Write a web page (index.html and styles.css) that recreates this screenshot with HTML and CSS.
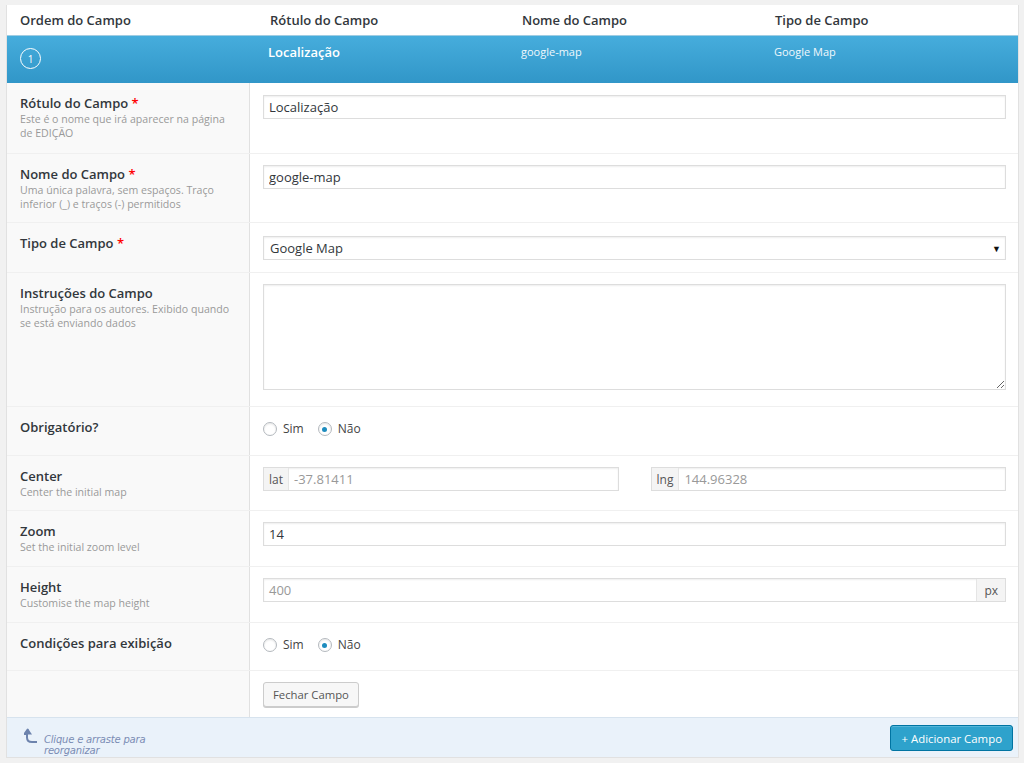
FILE: index.html
```html
<!DOCTYPE html>
<html lang="pt">
<head>
<meta charset="utf-8">
<title>Campos</title>
<link rel="stylesheet" href="styles.css">
</head>
<body>
<div class="box">
  <div class="thead">
    <div>Ordem do Campo</div>
    <div>Rótulo do Campo</div>
    <div>Nome do Campo</div>
    <div>Tipo de Campo</div>
  </div>
  <div class="field-row">
    <div><span class="order">1</span></div>
    <div class="fr-label">Localização</div>
    <div class="fr-small">google-map</div>
    <div class="fr-small">Google Map</div>
  </div>

  <div class="row r-two">
    <div class="lbl"><b>Rótulo do Campo <span class="req">*</span></b><p>Este é o nome que irá aparecer na página de EDIÇÃO</p></div>
    <div class="ctl"><input class="txt" type="text" value="Localização"></div>
  </div>
  <div class="row r-two">
    <div class="lbl"><b>Nome do Campo <span class="req">*</span></b><p>Uma única palavra, sem espaços. Traço inferior (_) e traços (-) permitidos</p></div>
    <div class="ctl"><input class="txt" type="text" value="google-map"></div>
  </div>
  <div class="row">
    <div class="lbl"><b>Tipo de Campo <span class="req">*</span></b></div>
    <div class="ctl ctl-sel"><div class="select"><span>Google Map</span><span class="caret">▼</span></div></div>
  </div>
  <div class="row">
    <div class="lbl"><b>Instruções do Campo</b><p>Instrução para os autores. Exibido quando se está enviando dados</p></div>
    <div class="ctl ctl-ta"><textarea class="ta"></textarea></div>
  </div>
  <div class="row">
    <div class="lbl"><b>Obrigatório?</b></div>
    <div class="ctl ctl-radio ctl-radio-tall">
      <label class="radio"><span class="dot"></span>Sim</label>
      <label class="radio"><span class="dot on"></span>Não</label>
    </div>
  </div>
  <div class="row">
    <div class="lbl"><b>Center</b><p>Center the initial map</p></div>
    <div class="ctl ctl-pair">
      <div class="group"><span class="addon">lat</span><span class="ph">-37.81411</span></div>
      <div class="group"><span class="addon">lng</span><span class="ph">144.96328</span></div>
    </div>
  </div>
  <div class="row">
    <div class="lbl lbl-tall"><b>Zoom</b><p>Set the initial zoom level</p></div>
    <div class="ctl"><input class="txt" type="text" value="14"></div>
  </div>
  <div class="row">
    <div class="lbl lbl-tall"><b>Height</b><p>Customise the map height</p></div>
    <div class="ctl"><div class="group"><span class="ph">400</span><span class="addon addon-r">px</span></div></div>
  </div>
  <div class="row">
    <div class="lbl"><b>Condições para exibição</b></div>
    <div class="ctl ctl-radio">
      <label class="radio"><span class="dot"></span>Sim</label>
      <label class="radio"><span class="dot on"></span>Não</label>
    </div>
  </div>
  <div class="row">
    <div class="lbl"></div>
    <div class="ctl ctl-btn"><button class="btn">Fechar Campo</button></div>
  </div>

  <div class="footer">
    <div class="hint">
      <svg class="arrow" width="14" height="16" viewBox="0 0 14 16"><path d="M4 1 L0.5 6 H3 V9.5 Q3 14 8 14 H13" fill="none" stroke="#6d83ad" stroke-width="2"/><path d="M4 0.5 L0 6.5 H8 Z" fill="#6d83ad"/></svg>
      <span>Clique e arraste para<br>reorganizar</span>
    </div>
    <button class="btn-primary">+ Adicionar Campo</button>
  </div>
</div>
</body>
</html>
```
FILE: styles.css
```css
* { box-sizing: border-box; }
body {
  margin: 5px 5px 0 6px;
  background: #f1f1f1;
  font-family: "Open Sans", "Noto Sans", sans-serif;
  color: #333;
  font-size: 13px;
}
.box {
  background: #fff;
  border: 1px solid #e1e1e1;
  border-top: none;
}
.thead {
  display: grid;
  grid-template-columns: 250px 252px 253px 1fr;
  padding-left: 13px;
  height: 31px;
  align-items: center;
  font-weight: 600;
  font-size: 13px;
  color: #32373c;
  border-bottom: 1px solid #9fcde3;
}
.field-row {
  display: grid;
  grid-template-columns: 250px 252px 253px 1fr;
  padding-left: 13px;
  height: 47px;
  background: linear-gradient(#46addc, #3196c8);
  color: #fff;
}
.field-row > div { padding-top: 7px; line-height: 18px; }
.order {
  display: inline-flex;
  width: 21px; height: 21px;
  margin-top: 5px;
  border: 1px solid #fff;
  border-radius: 50%;
  align-items: center; justify-content: center;
  font-size: 10px;
  color: #fff;
}
.fr-label { font-weight: 600; font-size: 13px; margin-left: -2px; }
.fr-small { font-size: 11px; color: #f0f8fc; margin-left: -1px; }

.row {
  display: grid;
  grid-template-columns: 243px 1fr;
  border-top: 1px solid #f0f0f0;
}
.field-row + .row { border-top: none; }
.lbl {
  background: #f9f9f9;
  border-right: 1px solid #e1e1e1;
  padding: 11px 13px 11px;
}
.lbl-tall { padding-bottom: 12px; }
.lbl b {
  display: block;
  font-weight: 600;
  font-size: 13px;
  line-height: 18px;
  color: #32373c;
}
.req { color: #f00; }
.lbl p {
  margin: 0;
  font-size: 10.6px;
  line-height: 14px;
  color: #999;
}
.field-row + .row .lbl { padding-bottom: 13px; }
.ctl { padding: 11px 12px 12px 13px; }
.field-row + .row .ctl { padding-top: 12px; }
.txt, .select, .group, .ta {
  display: flex;
  width: 100%;
  height: 24px;
  border: 1px solid #ddd;
  box-shadow: inset 0 1px 2px rgba(0,0,0,.07);
  font-family: "Open Sans", sans-serif;
  font-size: 13px;
  color: #32373c;
  padding: 0 5px;
  background: #fff;
  border-radius: 0;
  outline: none;
}
.ctl-sel { padding-top: 13px; }
.select {
  align-items: center;
  justify-content: space-between;
  padding: 0 4px 0 6px;
}
.caret { font-size: 9px; color: #111; }
.ctl-ta { padding-top: 11px; padding-bottom: 16px; }
.ta { height: 106px; resize: vertical; }
.ctl-radio { display: flex; gap: 14px; padding-top: 14px; padding-bottom: 17px; }
.ctl-radio-tall { padding-bottom: 18px; }
.radio {
  display: flex; align-items: center; gap: 6px;
  font-size: 12px; color: #444; line-height: 16px;
}
.dot {
  width: 14px; height: 14px;
  border: 1px solid #b4b9be;
  border-radius: 50%;
  background: #fff;
  box-shadow: inset 0 1px 2px rgba(0,0,0,.1);
  display: inline-flex; align-items: center; justify-content: center;
}
.dot.on::after {
  content: "";
  width: 5px; height: 5px;
  border-radius: 50%;
  background: #1e8cbe;
}
.ctl-pair { display: flex; gap: 32px; }
.group { padding: 0; align-items: stretch; }
.addon {
  background: #f4f4f4;
  border-right: 1px solid #e5e5e5;
  padding: 0 5px;
  display: flex; align-items: center;
  font-size: 12px; color: #555;
}
.addon-r { border-right: none; border-left: 1px solid #e5e5e5; padding: 0 7px; }
.ph {
  flex: 1;
  display: flex; align-items: center;
  padding: 0 5px;
  color: #999; font-size: 13px;
}
.ctl-btn { padding: 11px 13px 10px; }
.btn {
  height: 25px;
  padding: 0 9px;
  border: 1px solid #ccc;
  border-radius: 3px;
  background: #f7f7f7;
  box-shadow: 0 1px 0 #ccc;
  font-family: "Open Sans", sans-serif;
  font-size: 11.3px;
  color: #555;
}
.footer {
  display: flex;
  justify-content: space-between;
  align-items: flex-start;
  background: #eaf2fa;
  border-top: 1px solid #d7e3ee;
  height: 40px;
  padding: 7px 5px 0 17px;
}
.hint { display: flex; align-items: flex-start; gap: 6px; }
.arrow { margin-top: 3px; }
.hint span {
  font-family: "DejaVu Sans", sans-serif;
  font-style: italic;
  font-size: 10px;
  line-height: 11px;
  color: #7a8cb4;
  padding-top: 9px;
  letter-spacing: -0.2px;
}
.btn-primary {
  height: 26px;
  padding: 0 10px;
  background: #2ea2cc;
  border: 1px solid #0074a2;
  border-radius: 3px;
  box-shadow: inset 0 1px 0 rgba(120,200,230,.5);
  color: #fff;
  font-family: "Open Sans", sans-serif;
  font-size: 11.4px;
}
```
